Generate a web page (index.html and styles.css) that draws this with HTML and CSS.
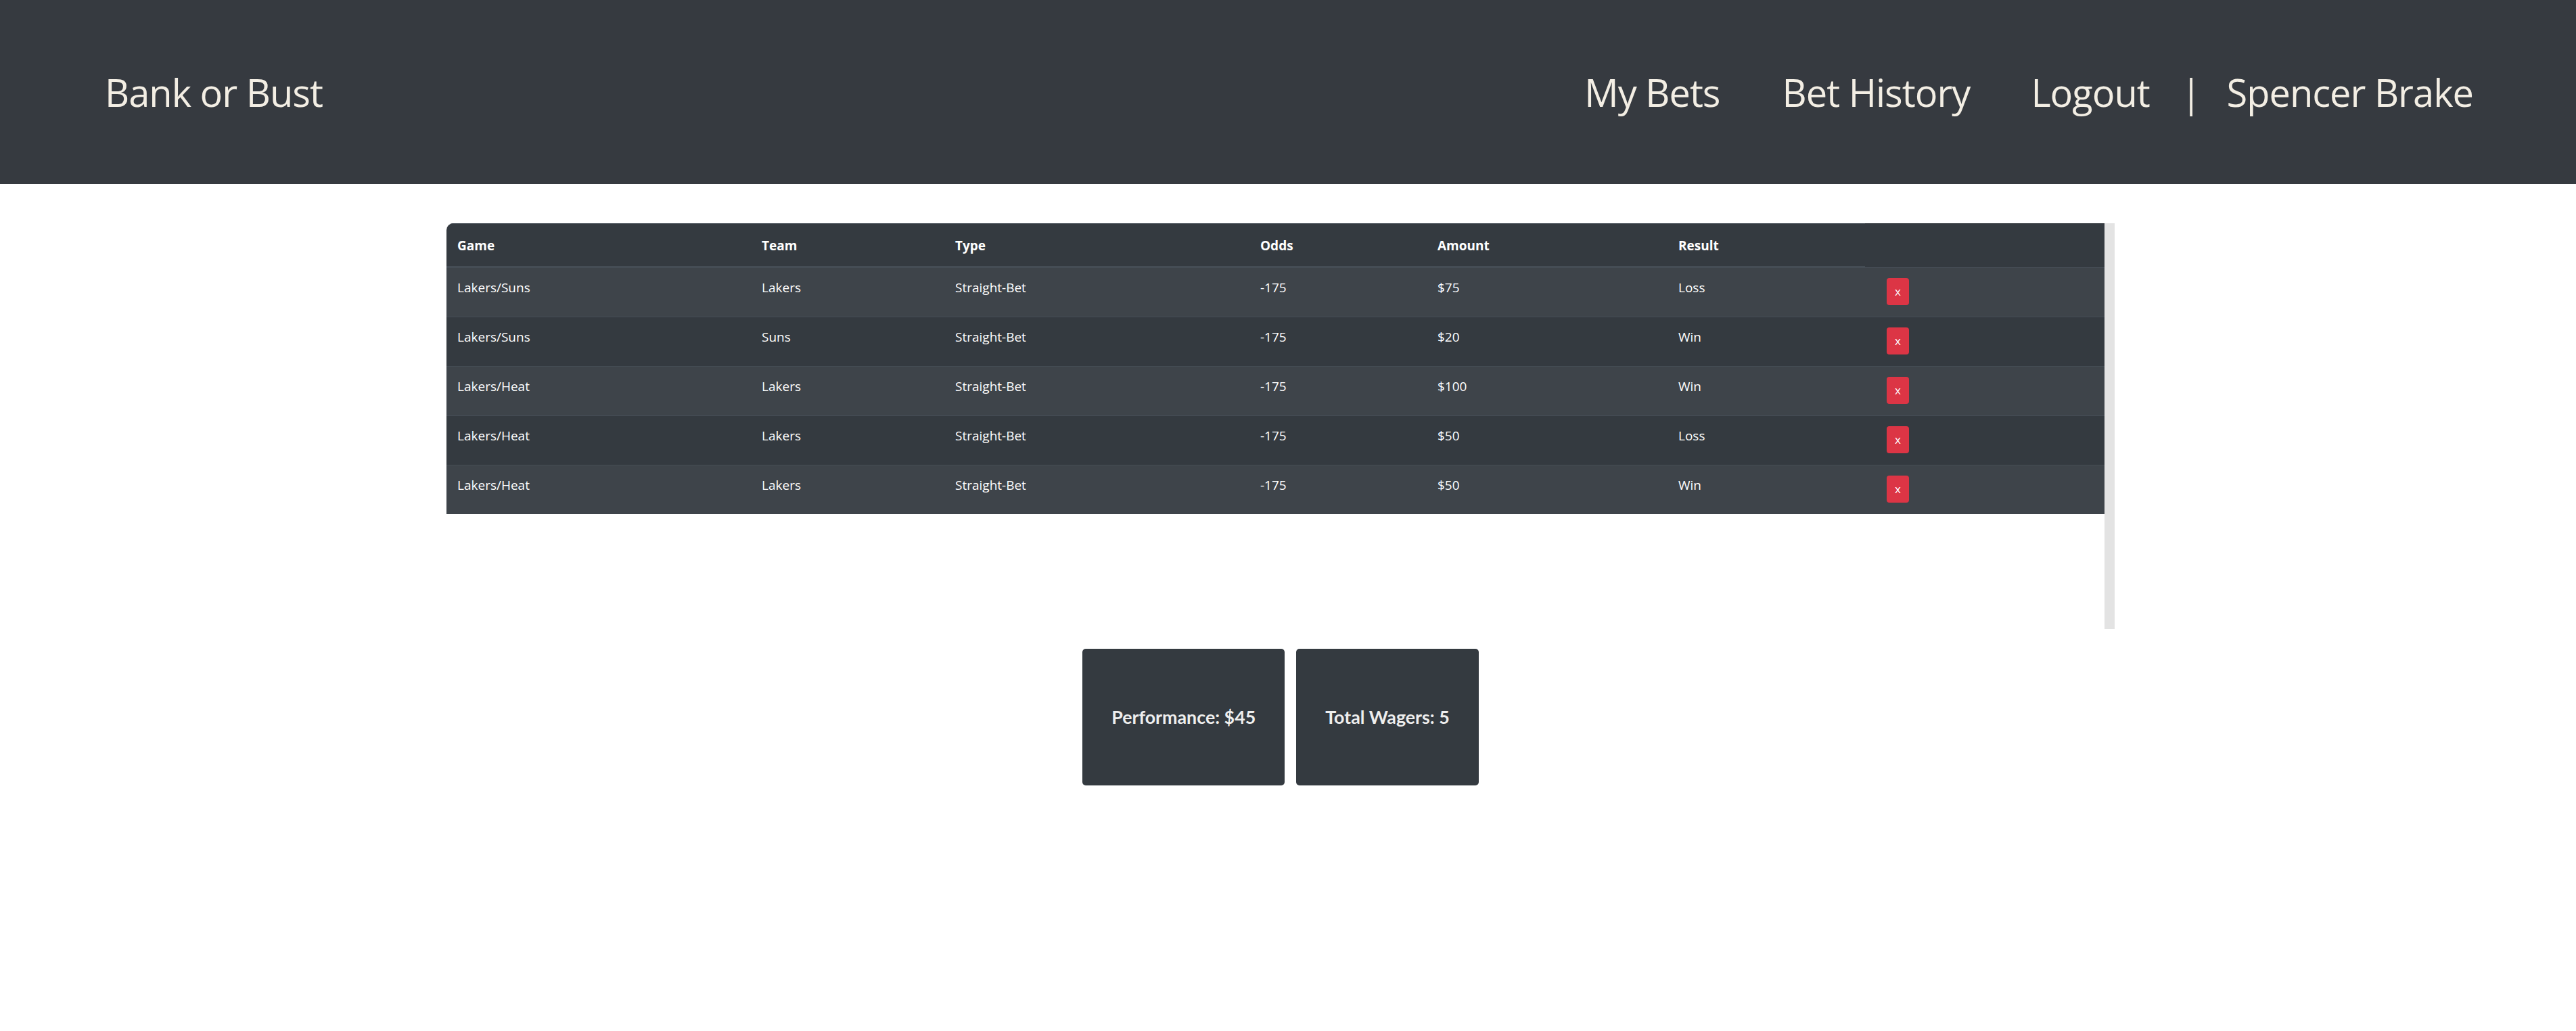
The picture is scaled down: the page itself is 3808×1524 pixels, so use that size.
FILE: index.html
```html
<!DOCTYPE html>
<html lang="en">
<head>
<meta charset="utf-8">
<title>Bank or Bust</title>
<link rel="stylesheet" href="styles.css">
</head>
<body>
<header class="topbar">
  <div class="brand">Bank or Bust</div>
  <nav class="nav">
    <a class="nav-link">My Bets</a>
    <a class="nav-link">Bet History</a>
    <a class="nav-link">Logout</a>
    <span class="nav-sep">|</span>
    <span class="nav-user">Spencer Brake</span>
  </nav>
</header>

<main class="main">
  <div class="scroll-area">
    <div class="table-box">
      <table class="bets">
        <colgroup>
          <col class="c-game"><col class="c-team"><col class="c-type"><col class="c-odds"><col class="c-amount"><col class="c-result"><col class="c-action">
        </colgroup>
        <thead>
          <tr>
            <th>Game</th><th>Team</th><th>Type</th><th>Odds</th><th>Amount</th><th>Result</th>
          </tr>
        </thead>
        <tbody>
          <tr><td>Lakers/Suns</td><td>Lakers</td><td>Straight-Bet</td><td>-175</td><td>$75</td><td>Loss</td><td><button class="del">x</button></td></tr>
          <tr><td>Lakers/Suns</td><td>Suns</td><td>Straight-Bet</td><td>-175</td><td>$20</td><td>Win</td><td><button class="del">x</button></td></tr>
          <tr><td>Lakers/Heat</td><td>Lakers</td><td>Straight-Bet</td><td>-175</td><td>$100</td><td>Win</td><td><button class="del">x</button></td></tr>
          <tr><td>Lakers/Heat</td><td>Lakers</td><td>Straight-Bet</td><td>-175</td><td>$50</td><td>Loss</td><td><button class="del">x</button></td></tr>
          <tr><td>Lakers/Heat</td><td>Lakers</td><td>Straight-Bet</td><td>-175</td><td>$50</td><td>Win</td><td><button class="del">x</button></td></tr>
        </tbody>
      </table>
    </div>
    <div class="scroll-track"></div>
  </div>

  <div class="stats">
    <div class="stat-card">Performance: $45</div>
    <div class="stat-card">Total Wagers: 5</div>
  </div>
</main>
</body>
</html>
```

FILE: styles.css
```css
html, body {
  margin: 0;
  padding: 0;
  background: #ffffff;
}

body {
  font-family: "Open Sans", "Noto Sans", sans-serif;
  width: 3808px;
  height: 1524px;
  overflow: hidden;
}

.topbar {
  height: 272px;
  background: #363a40;
  display: flex;
  align-items: center;
  justify-content: space-between;
  padding: 0 152px 0 155px;
  box-sizing: border-box;
  color: #f3eee4;
  font-size: 56px;
  letter-spacing: -1px;
}

.brand {
  white-space: nowrap;
}

.nav {
  display: flex;
  align-items: center;
  gap: 90px;
}

.nav-link, .nav-user {
  color: #f3eee4;
  text-decoration: none;
  white-space: nowrap;
}

.nav-link:first-child {
  margin-right: 2px;
}

.nav-sep {
  margin: 0 -52px 0 -44px;
}

.main {
  width: 2466px;
  margin-left: 660px;
  padding-top: 58px;
}

.scroll-area {
  display: flex;
  align-items: flex-start;
  height: 600px;
}

.table-box {
  flex: 1;
  border-top-left-radius: 10px;
  overflow: hidden;
}

.scroll-track {
  width: 15px;
  height: 600px;
  background: #e3e3e3;
}

.bets {
  width: 100%;
  table-layout: fixed;
  border-collapse: separate;
  border-spacing: 0;
  background: #343a40;
  color: #ffffff;
  font-size: 19px;
  line-height: 28.5px;
}

.c-game { width: 450px; }
.c-team { width: 286px; }
.c-type { width: 451px; }
.c-odds { width: 262px; }
.c-amount { width: 356px; }
.c-result { width: 292px; }
.c-action { width: auto; }

.bets thead tr {
  height: 65px;
}

.bets th {
  text-align: left;
  font-weight: 700;
  padding: 2px 16px 0;
  vertical-align: middle;
  border-top: 1px solid #454d55;
  border-bottom: 2px solid #454d55;
}

.bets tbody tr {
  height: 73px;
}

.bets tbody tr:nth-child(odd) {
  background: #3e444a;
}

.bets td {
  padding: 15px 16px 0;
  vertical-align: top;
  border-top: 1px solid #454d55;
  white-space: nowrap;
}

.del {
  display: block;
  margin-left: 16px;
  width: 33px;
  height: 40px;
  padding: 0;
  border: none;
  border-radius: 4px;
  background: #dc3545;
  color: #ffffff;
  font-family: "Open Sans", sans-serif;
  font-size: 17px;
  line-height: 40px;
  text-align: center;
}

.stats {
  display: flex;
  justify-content: center;
  gap: 17px;
  margin-top: 29px;
}

.stat-card {
  height: 202px;
  display: flex;
  align-items: center;
  padding: 0 43px;
  background: #343a40;
  border-radius: 5px;
  color: #eeeeee;
  font-family: "Lato", sans-serif;
  font-weight: 700;
  font-size: 26.8px;
  white-space: nowrap;
}
```
